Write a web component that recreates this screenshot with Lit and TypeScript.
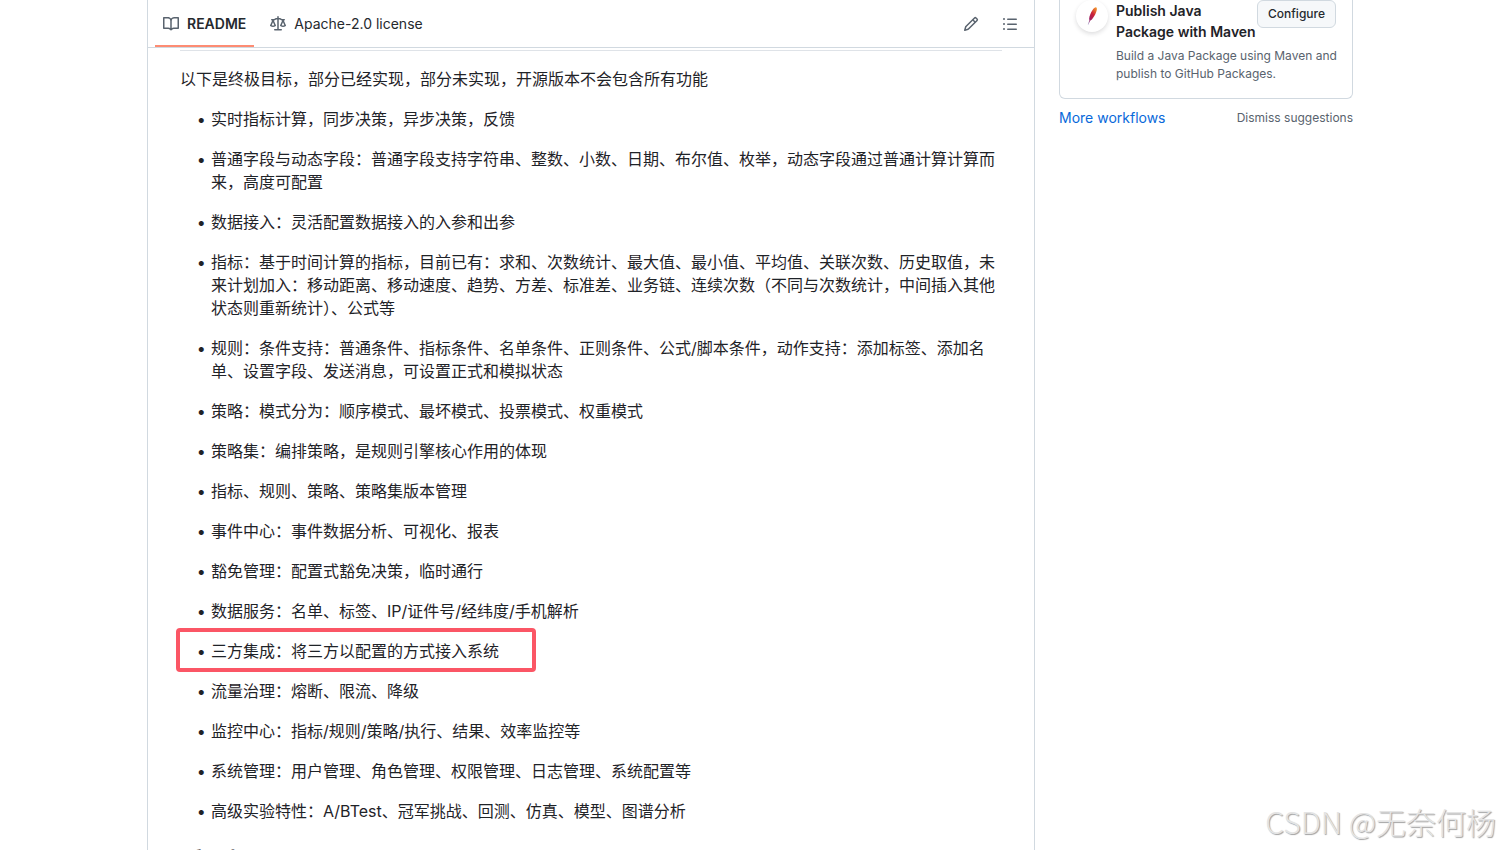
import { LitElement, html, css, svg } from "lit";
import { customElement } from "lit/decorators.js";

const FEATURES: { text: string; marked?: boolean }[] = [
  { text: "实时指标计算，同步决策，异步决策，反馈" },
  { text: "普通字段与动态字段：普通字段支持字符串、整数、小数、日期、布尔值、枚举，动态字段通过普通计算计算而来，高度可配置" },
  { text: "数据接入：灵活配置数据接入的入参和出参" },
  { text: "指标：基于时间计算的指标，目前已有：求和、次数统计、最大值、最小值、平均值、关联次数、历史取值，未来计划加入：移动距离、移动速度、趋势、方差、标准差、业务链、连续次数（不同与次数统计，中间插入其他状态则重新统计）、公式等" },
  { text: "规则：条件支持：普通条件、指标条件、名单条件、正则条件、公式/脚本条件，动作支持：添加标签、添加名单、设置字段、发送消息，可设置正式和模拟状态" },
  { text: "策略：模式分为：顺序模式、最坏模式、投票模式、权重模式" },
  { text: "策略集：编排策略，是规则引擎核心作用的体现" },
  { text: "指标、规则、策略、策略集版本管理" },
  { text: "事件中心：事件数据分析、可视化、报表" },
  { text: "豁免管理：配置式豁免决策，临时通行" },
  { text: "数据服务：名单、标签、IP/证件号/经纬度/手机解析" },
  { text: "三方集成：将三方以配置的方式接入系统", marked: true },
  { text: "流量治理：熔断、限流、降级" },
  { text: "监控中心：指标/规则/策略/执行、结果、效率监控等" },
  { text: "系统管理：用户管理、角色管理、权限管理、日志管理、系统配置等" },
  { text: "高级实验特性：A/BTest、冠军挑战、回测、仿真、模型、图谱分析" },
];

const ICONS = {
  book: "M0 1.75A.75.75 0 0 1 .75 1h4.253c1.227 0 2.317.59 3 1.501A3.743 3.743 0 0 1 11.006 1h4.245a.75.75 0 0 1 .75.75v10.5a.75.75 0 0 1-.75.75h-4.507a2.25 2.25 0 0 0-1.591.659l-.622.621a.75.75 0 0 1-1.06 0l-.622-.621A2.25 2.25 0 0 0 5.258 13H.75a.75.75 0 0 1-.75-.75Zm7.251 10.324.004-5.073-.002-2.253A2.25 2.25 0 0 0 5.003 2.5H1.5v9h3.757a3.75 3.75 0 0 1 1.994.574ZM8.755 4.75l-.004 7.322a3.752 3.752 0 0 1 1.992-.572H14.5v-9h-3.495a2.25 2.25 0 0 0-2.25 2.25Z",
  law: "M8.75.75V2h.985c.304 0 .603.08.867.231l1.29.736c.038.022.08.033.124.033h2.234a.75.75 0 0 1 0 1.5h-.427l2.111 4.692a.75.75 0 0 1-.154.838l-.53-.53.529.531-.001.002-.002.002-.006.006-.006.005-.01.01-.045.04c-.21.176-.441.327-.686.45C14.556 10.78 13.88 11 13 11a4.498 4.498 0 0 1-2.023-.454 3.544 3.544 0 0 1-.686-.45l-.045-.04-.016-.015-.006-.006-.004-.004v-.001a.75.75 0 0 1-.154-.838L12.178 4.5h-.162c-.305 0-.604-.079-.868-.231l-1.29-.736a.245.245 0 0 0-.124-.033H8.75V13h2.5a.75.75 0 0 1 0 1.5h-6.5a.75.75 0 0 1 0-1.5h2.5V3.5h-.984a.245.245 0 0 0-.124.033l-1.289.737c-.265.15-.564.23-.869.23h-.162l2.112 4.692a.75.75 0 0 1-.154.838l-.53-.53.529.531-.001.002-.002.002-.006.006-.016.015-.045.04c-.21.176-.441.327-.686.45C4.556 10.78 3.88 11 3 11a4.498 4.498 0 0 1-2.023-.454 3.544 3.544 0 0 1-.686-.45l-.045-.04-.016-.015-.006-.006-.004-.004v-.001a.75.75 0 0 1-.154-.838L2.178 4.5H1.75a.75.75 0 0 1 0-1.5h2.234a.249.249 0 0 0 .125-.033l1.288-.737c.265-.15.564-.23.869-.23h.984V.75a.75.75 0 0 1 1.5 0Zm2.945 8.477c.285.135.718.273 1.305.273s1.02-.138 1.305-.273L13 6.327Zm-10 0c.285.135.718.273 1.305.273s1.02-.138 1.305-.273L3 6.327Z",
  pencil: "M11.013 1.427a1.75 1.75 0 0 1 2.474 0l1.086 1.086a1.75 1.75 0 0 1 0 2.474l-8.61 8.61c-.21.21-.47.364-.756.445l-3.251.93a.75.75 0 0 1-.927-.928l.929-3.25c.081-.286.235-.547.445-.758l8.61-8.61Zm.176 4.823L9.75 4.81l-6.286 6.287a.253.253 0 0 0-.064.108l-.558 1.953 1.953-.558a.253.253 0 0 0 .108-.064Zm1.238-3.763a.25.25 0 0 0-.354 0L10.811 3.75l1.439 1.44 1.263-1.263a.25.25 0 0 0 0-.354Z",
  list: "M5.75 2.5h8.5a.75.75 0 0 1 0 1.5h-8.5a.75.75 0 0 1 0-1.5Zm0 5h8.5a.75.75 0 0 1 0 1.5h-8.5a.75.75 0 0 1 0-1.5Zm0 5h8.5a.75.75 0 0 1 0 1.5h-8.5a.75.75 0 0 1 0-1.5ZM2 14a1 1 0 1 1 0-2 1 1 0 0 1 0 2Zm1-6a1 1 0 1 1-2 0 1 1 0 0 1 2 0ZM2 4a1 1 0 1 1 0-2 1 1 0 0 1 0 2Z",
};

const icon = (name: keyof typeof ICONS) => html`
  <svg class="icon" viewBox="0 0 16 16" aria-hidden="true">${svg`<path d=${ICONS[name]}></path>`}</svg>
`;

@customElement("readme-panel")
export class ReadmePanel extends LitElement {
  static styles = css`
    :host {
      display: block;
      border: solid #d1d9e0;
      border-width: 0 1px;
    }
    .bar {
      display: flex;
      align-items: stretch;
      justify-content: space-between;
      height: 48px;
      box-sizing: border-box;
      border-bottom: 1px solid #d1d9e0;
      padding: 0 9px 0 7px;
    }
    .tabs {
      display: flex;
      gap: 8px;
    }
    .tab {
      display: flex;
      align-items: center;
      gap: 8px;
      padding: 0 8px;
      color: #25292e;
      font-size: 14px;
      line-height: 20px;
      text-decoration: none;
    }
    .tab.current {
      font-weight: 600;
      box-shadow: inset 0 -2px #fd8c73;
    }
    .icon {
      width: 16px;
      height: 16px;
      fill: #59636e;
      flex: none;
    }
    .actions {
      display: flex;
      align-items: center;
      gap: 8px;
    }
    .tool {
      display: grid;
      place-items: center;
      width: 31px;
      height: 32px;
      padding: 0;
      border: 0;
      background: none;
    }
    .article {
      padding: 2px 32px 32px;
      color: #1f2328;
      font-size: 16px;
      line-height: 23px;
    }
    .rule {
      height: 1px;
      border: 0;
      margin: 0 0 17px;
      background: #dfe3e8;
    }
    p {
      margin: 0 0 17px;
    }
    ul {
      display: grid;
      gap: 17px;
      margin: 0;
      padding: 0 0 0 31px;
      list-style-type: "•\\2004";
    }
    .marked {
      position: relative;
    }
    .marked::after {
      content: "";
      position: absolute;
      left: -35px;
      top: -12px;
      width: 360px;
      height: 44px;
      box-sizing: border-box;
      border: 4px solid #fb5665;
      border-radius: 4px;
    }
    h2 {
      margin: 24px 0 16px;
      font-size: 24px;
      line-height: 30px;
      font-weight: 600;
    }
  `;

  render() {
    return html`
      <nav class="bar" aria-label="Repository files">
        <div class="tabs">
          <a class="tab current" href="#readme" aria-current="page">${icon("book")}<span>README</span></a>
          <a class="tab" href="#license">${icon("law")}<span>Apache-2.0 license</span></a>
        </div>
        <div class="actions">
          <button class="tool" aria-label="Edit file">${icon("pencil")}</button>
          <button class="tool" aria-label="Outline">${icon("list")}</button>
        </div>
      </nav>
      <article class="article">
        <hr class="rule" />
        <p>以下是终极目标，部分已经实现，部分未实现，开源版本不会包含所有功能</p>
        <ul>
          ${FEATURES.map((f) => html`<li class=${f.marked ? "marked" : ""}>${f.text}</li>`)}
        </ul>
        <h2>适用场景</h2>
      </article>
    `;
  }
}

@customElement("workflow-suggestions")
export class WorkflowSuggestions extends LitElement {
  static styles = css`
    :host {
      display: block;
    }
    .card {
      display: flex;
      align-items: flex-start;
      gap: 8px;
      border: 1px solid #d1d9e0;
      border-top: 0;
      border-radius: 0 0 6px 6px;
      padding: 0 8px 15px 16px;
    }
    .logo {
      flex: none;
      width: 32px;
      height: 32px;
      border-radius: 50%;
      background: #fff;
      box-shadow: 0 2px 4px rgba(31, 35, 40, 0.15);
    }
    .body {
      flex: 1;
    }
    .top {
      display: flex;
      align-items: flex-start;
      justify-content: space-between;
      padding-right: 8px;
    }
    h3 {
      margin: 0;
      font-size: 14px;
      line-height: 21px;
      font-weight: 600;
      color: #1f2328;
      white-space: nowrap;
    }
    p {
      margin: 5px 0 0;
      font-size: 12px;
      line-height: 18px;
      color: #59636e;
    }
    .configure {
      height: 28px;
      padding: 0 10px;
      border: 1px solid #d1d9e0;
      border-radius: 6px;
      background: #f6f8fa;
      color: #25292e;
      font: 500 12px/20px Inter, sans-serif;
    }
    .links {
      display: flex;
      align-items: center;
      justify-content: space-between;
      margin-top: 8px;
      line-height: 21px;
    }
    .more {
      color: #0969da;
      font-size: 14px;
      text-decoration: none;
    }
    .dismiss {
      padding: 0;
      border: 0;
      background: none;
      color: #59636e;
      font: 12px/21px Inter, sans-serif;
    }
  `;

  render() {
    return html`
      <section class="card">
        <svg class="logo" viewBox="0 0 32 32" aria-hidden="true">
          <defs>
            <linearGradient id="feather" x1="0.8" y1="0" x2="0.2" y2="1">
              <stop offset="0" stop-color="#f0912b"></stop>
              <stop offset="0.4" stop-color="#cb2138"></stop>
              <stop offset="0.75" stop-color="#9e2064"></stop>
              <stop offset="1" stop-color="#a58fc0"></stop>
            </linearGradient>
          </defs>
          <path fill="url(#feather)" d="M19.800 7.200c1.600.3 1.300 2.600.3 5.100-.9 2.500-2.500 5.200-4.200 7.200l-1.500 1.100-2.200 4.100-.4-.2 1.500-3.900c-.6-2.300.5-5.500 1.900-8.300 1.300-2.700 3.100-4.900 4.600-5.100Z"></path>
        </svg>
        <div class="body">
          <div class="top">
            <h3>Publish Java<br />Package with Maven</h3>
            <button class="configure">Configure</button>
          </div>
          <p>Build a Java Package using Maven and publish to GitHub Packages.</p>
        </div>
      </section>
      <div class="links">
        <a class="more" href="#workflows">More workflows</a>
        <button class="dismiss">Dismiss suggestions</button>
      </div>
    `;
  }
}

@customElement("app-root")
export class AppRoot extends LitElement {
  static styles = css`
    :host {
      display: block;
      position: relative;
      height: 100vh;
      overflow: hidden;
      background: #fff;
      font-family: Inter, "Noto Sans CJK SC", sans-serif;
    }
    .page {
      display: grid;
      grid-template-columns: minmax(0, 1fr) 294px;
      gap: 24px;
      max-width: 1206px;
      margin: 0 auto;
    }
    .watermark {
      position: absolute;
      right: 4px;
      bottom: 7px;
      font: 300 30px/44px "Noto Sans CJK SC", sans-serif;
      color: #e4e4e4;
      text-shadow: 1px 1px 1px #a0a0a0;
    }
  `;

  render() {
    return html`
      <main class="page" lang="zh-CN">
        <readme-panel></readme-panel>
        <workflow-suggestions></workflow-suggestions>
      </main>
      <div class="watermark" lang="zh-CN">CSDN @无奈何杨</div>
    `;
  }
}
